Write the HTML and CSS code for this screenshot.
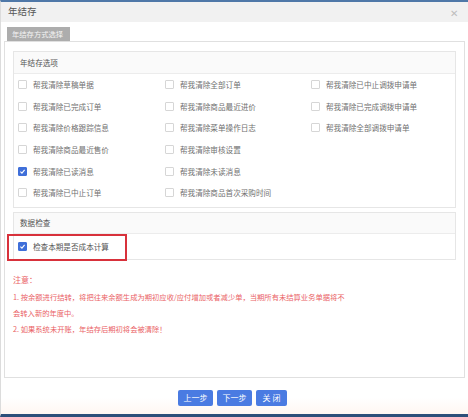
FILE: index.html
```html
<!DOCTYPE html>
<html lang="zh">
<head>
<meta charset="utf-8">
<title>年结存</title>
<link rel="stylesheet" href="styles.css">
</head>
<body>
<div class="window">
  <div class="titlebar">
    <span class="title">年结存</span>
    <span class="close">✕</span>
  </div>
  <div class="content">
    <div class="tabs"><span class="tab">年结存方式选择</span></div>
    <div class="panel">
      <div class="fieldset">
        <div class="fs-head">年结存选项</div>
        <div class="grid">
          <label class="opt"><span class="cb"></span>帮我清除草稿单据</label>
          <label class="opt"><span class="cb"></span>帮我清除全部订单</label>
          <label class="opt"><span class="cb"></span>帮我清除已中止调拨申请单</label>
          <label class="opt"><span class="cb"></span>帮我清除已完成订单</label>
          <label class="opt"><span class="cb"></span>帮我清除商品最近进价</label>
          <label class="opt"><span class="cb"></span>帮我清除已完成调拨申请单</label>
          <label class="opt"><span class="cb"></span>帮我清除价格跟踪信息</label>
          <label class="opt"><span class="cb"></span>帮我清除菜单操作日志</label>
          <label class="opt"><span class="cb"></span>帮我清除全部调拨申请单</label>
          <label class="opt"><span class="cb"></span>帮我清除商品最近售价</label>
          <label class="opt"><span class="cb"></span>帮我清除审核设置</label>
          <span></span>
          <label class="opt"><span class="cb checked"><svg viewBox="0 0 10 10"><path d="M2 5.2 L4.2 7.3 L8 2.8" fill="none" stroke="#fff" stroke-width="1.6"/></svg></span>帮我清除已读消息</label>
          <label class="opt"><span class="cb"></span>帮我清除未读消息</label>
          <span></span>
          <label class="opt"><span class="cb"></span>帮我清除已中止订单</label>
          <label class="opt"><span class="cb"></span>帮我清除商品首次采购时间</label>
          <span></span>
        </div>
      </div>
      <div class="fieldset fs2">
        <div class="fs-head">数据检查</div>
        <div class="check-row">
          <label class="opt"><span class="cb checked"><svg viewBox="0 0 10 10"><path d="M2 5.2 L4.2 7.3 L8 2.8" fill="none" stroke="#fff" stroke-width="1.6"/></svg></span>检查本期是否成本计算</label>
          <span class="highlight"></span>
        </div>
      </div>
      <div class="notes">
        <p class="notes-title">注意：</p>
        <p>1. 按余额进行结转，将把往来余额生成为期初应收/应付增加或者减少单，当期所有未结算业务单据将不</p>
        <p>会转入新的年度中。</p>
        <p>2. 如果系统未开账，年结存后期初将会被清除！</p>
      </div>
    </div>
    <div class="buttons">
      <button class="btn">上一步</button>
      <button class="btn">下一步</button>
      <button class="btn narrow">关 闭</button>
    </div>
  </div>
</div>
</body>
</html>
```

FILE: styles.css
```css
* { box-sizing: border-box; }
html, body { margin: 0; padding: 0; background: #fff; }
body {
  font-family: "Noto Sans CJK SC", "Noto Sans", sans-serif;
  color: #555;
}
.window {
  width: 468px;
  height: 417px;
  border-top: 2px solid #4f78a8;
  border-bottom: 3px solid #2d4f7a;
  border-left: 1px solid #dcdcdc;
  display: flex;
  flex-direction: column;
  background: linear-gradient(#fff 96%, #fff7f2);
}
.titlebar {
  height: 20px;
  background: #f1f1f1;
  display: flex;
  align-items: center;
  justify-content: space-between;
  padding: 0 10px 0 7px;
}
.title { font-size: 9.5px; color: #555; line-height: 1; }
.close { font-size: 10px; color: #bdbdbd; line-height: 1; margin-top: 2px; }
.content {
  flex: 1;
  padding: 5px 3px 0 3px;
  display: flex;
  flex-direction: column;
}
.tabs {
  height: 14px;
  padding-left: 3px;
  display: flex;
}
.tab {
  background: #adadad;
  color: #f4f4f4;
  font-size: 7.3px;
  line-height: 14px;
  padding: 0 5px;
  width: 63px;
}
.panel {
  height: 337px;
  border: 1px solid #e0e0e0;
  padding: 9px 8px 0 8px;
  display: flex;
  flex-direction: column;
}
.fieldset {
  border: 1px solid #e6e6e6;
}
.fs-head {
  height: 22px;
  background: #fafafa;
  border-bottom: 1px solid #ececec;
  font-size: 7.6px;
  color: #555;
  line-height: 21px;
  padding-left: 6px;
}
.grid {
  display: grid;
  grid-template-columns: 147px 146px 1fr;
  grid-auto-rows: 21.6px;
  padding: 0 0 3px 4px;
}
.opt {
  display: flex;
  align-items: center;
  font-size: 7.6px;
  color: #707070;
  white-space: nowrap;
}
.cb {
  width: 9px;
  height: 9px;
  border: 1px solid #d6d6d6;
  border-radius: 1px;
  margin-right: 6px;
  flex: none;
  display: flex;
  background: #fff;
}
.cb.checked {
  background: #3f6fd9;
  border-color: #3f6fd9;
}
.cb svg { width: 100%; height: 100%; }
.fs2 { margin-top: 4px; }
.fs2 .fs-head { height: 21px; line-height: 20px; }
.check-row {
  position: relative;
  height: 25px;
  padding-left: 4px;
  display: flex;
  align-items: center;
}
.check-row .opt { color: #555; }
.highlight {
  position: absolute;
  left: -7px;
  top: 0;
  width: 120px;
  height: 27px;
  border: 2px solid #d8313b;
}
.notes {
  margin-top: 11px;
  padding-left: 0;
  color: #ea6266;
  font-size: 7.3px;
}
.notes p {
  margin: 0;
  line-height: 16px;
  white-space: nowrap;
}
.notes .notes-title { font-size: 8px; line-height: 18px; }
.buttons {
  display: flex;
  justify-content: center;
  gap: 4px;
  margin-top: 12px;
  padding-right: 4px;
}
.btn {
  width: 35px;
  height: 16px;
  border: none;
  border-radius: 2px;
  background: #4a7be2;
  color: #fff;
  font-family: "Noto Sans CJK SC", sans-serif;
  font-size: 8px;
  padding: 0;
  line-height: 16px;
}
.btn.narrow { width: 31px; }
```
